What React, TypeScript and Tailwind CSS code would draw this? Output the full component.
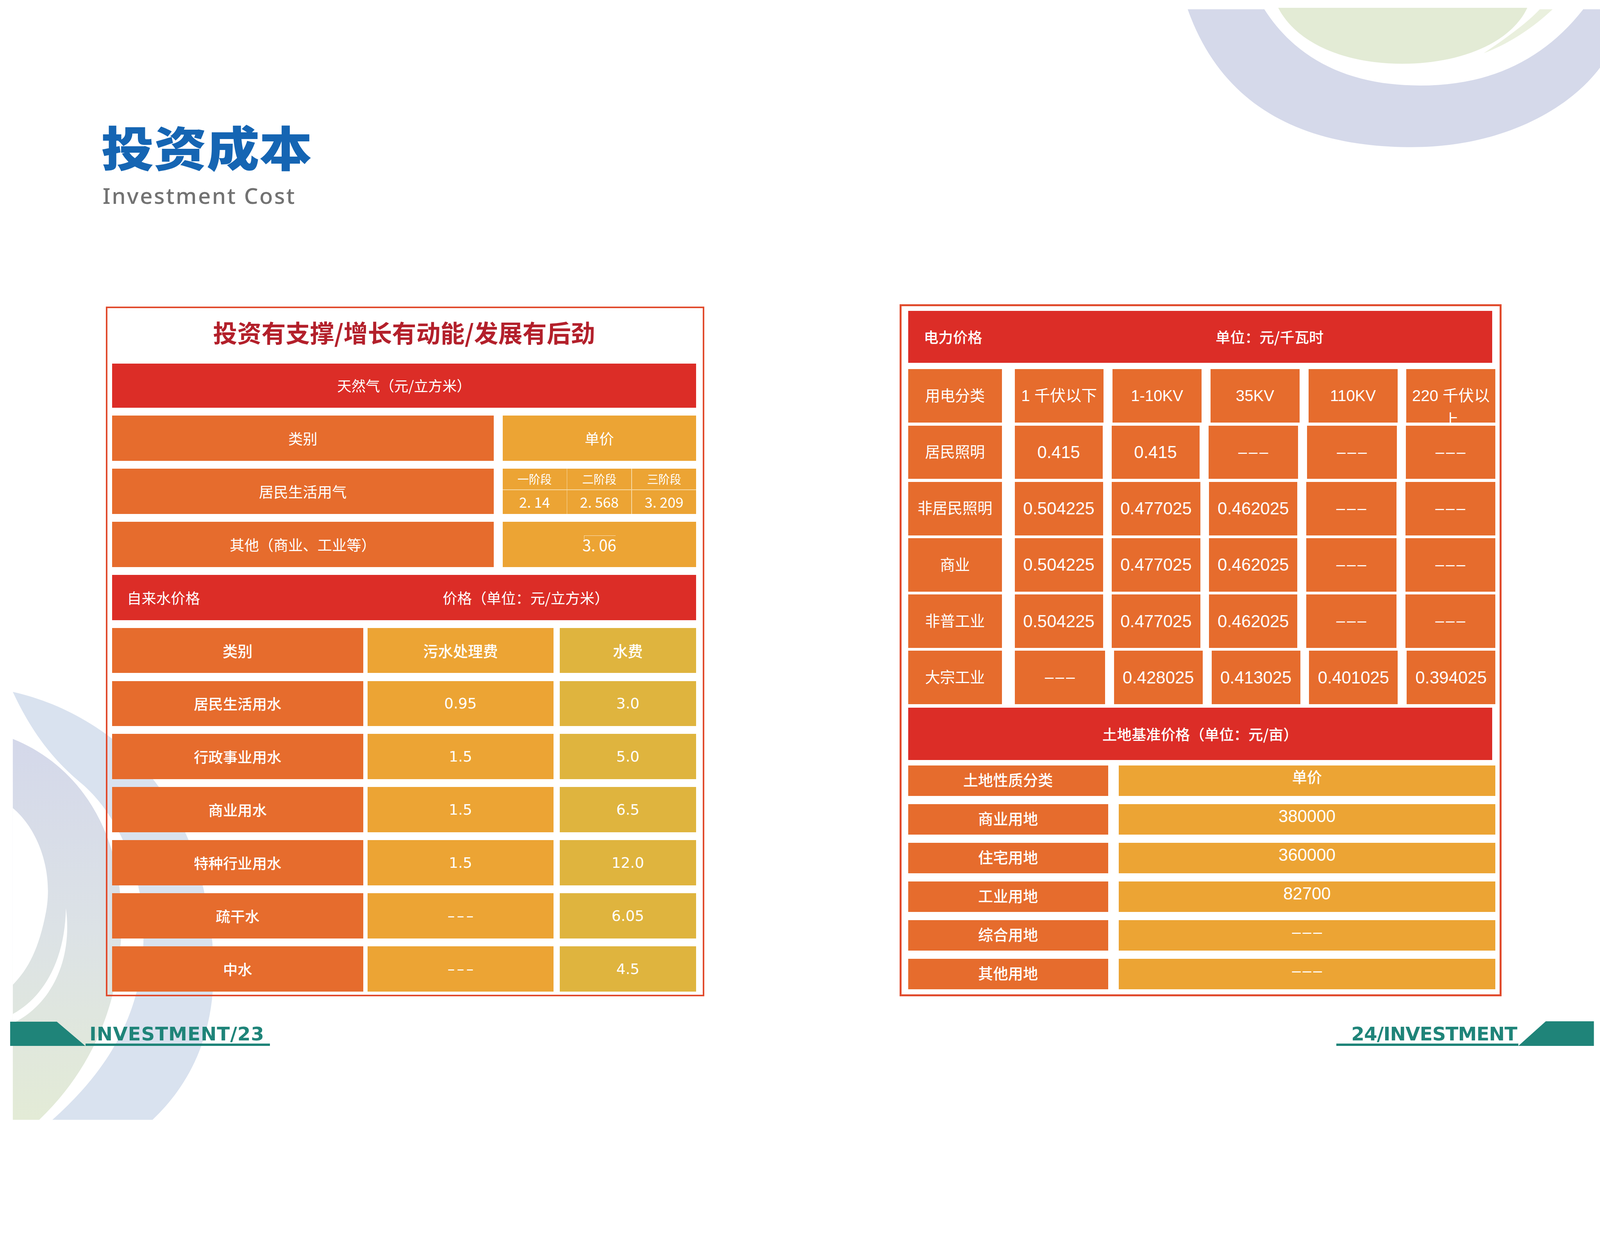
import React from "react";

const CJK = "font-['Noto_Sans_CJK_SC',sans-serif]";
const ARIAL = "font-['Liberation_Sans','Noto_Sans_CJK_SC',sans-serif]";
const VERA = "font-['DejaVu_Sans','Noto_Sans_CJK_SC',sans-serif]";

const RED = "bg-[#dc2d27]";
const ORANGE = "bg-[#e66c2d]";
const AMBER = "bg-[#eca434]";
const GOLD = "bg-[#dfb43e]";

const DASH = "–––";

// background swirls (top right and bottom left)
const Decor = () => (
  <svg
    className="pointer-events-none absolute inset-0"
    width="4490"
    height="3175"
    viewBox="0 0 4490 3175"
  >
    <defs>
      <linearGradient id="lav" x1="0" y1="0" x2="0" y2="1">
        <stop offset="0" stopColor="#d4d8ea" />
        <stop offset="0.5" stopColor="#dce2e6" />
        <stop offset="1" stopColor="#e3ebd6" />
      </linearGradient>
    </defs>
    <path
      d="M3333 26 C3440 330 3700 413 3963 413 C4210 413 4400 310 4490 190 L4490 26 L4443 26 C4330 170 4180 240 3985 240 C3790 240 3640 170 3548 26 Z"
      fill="#d5d9ea"
    />
    <path
      d="M3587 22 C3640 125 3780 179 3935 179 C4100 179 4240 120 4286 22 Z"
      fill="#e3ebd5"
    />
    <path
      d="M4321 26 L4357 26 C4300 80 4230 125 4164 149 C4230 105 4290 60 4321 26 Z"
      fill="#eaf0de"
    />

    <path
      d="M36 2074 C200 2140 330 2300 340 2550 C350 2800 260 3000 110 3143 L36 3143 Z"
      fill="url(#lav)"
    />
    <path
      d="M36 2268 C110 2330 150 2450 129 2560 C110 2660 80 2720 36 2764 Z"
      fill="#ffffff"
    />
    <path
      d="M185 2549 C182 2700 120 2800 36 2846 L36 2872 C140 2822 205 2700 185 2549 Z"
      fill="#ffffff"
    />
    <path
      d="M36 1942 C250 1990 480 2150 560 2450 C640 2750 600 2980 428 3143 L147 3143 C330 2980 420 2800 400 2560 C380 2380 300 2260 230 2200 C170 2150 100 2080 36 1942 Z"
      fill="#d9e2ef"
    />
  </svg>
);

const GasRow = ({
  label,
  children,
}: {
  label: string;
  children: React.ReactNode;
}) => (
  <div className="flex h-[127px] gap-[25px]">
    <div
      className={`flex w-[1071px] items-center justify-center text-[41px] ${ORANGE}`}
    >
      {label}
    </div>
    <div className={`relative flex-1 ${AMBER}`}>{children}</div>
  </div>
);

const water = [
  ["居民生活用水", "0.95", "3.0"],
  ["行政事业用水", "1.5", "5.0"],
  ["商业用水", "1.5", "6.5"],
  ["特种行业用水", "1.5", "12.0"],
  ["疏干水", DASH, "6.05"],
  ["中水", DASH, "4.5"],
];

const LeftPanel = () => (
  <div className="mt-[6px] flex w-[1679px] flex-col border-[5px] border-[#e14b2d] pb-[9px] pl-[13px] pr-[18px]">
    <div
      className={`flex h-[156px] items-center justify-center pb-[22px] text-[68px] font-bold leading-none text-[#b3202b] ${CJK}`}
    >
      投资有支撑/增长有动能/发展有后劲
    </div>
    <div className={`flex flex-col gap-[22px] text-white ${CJK}`}>
      <div
        className={`flex h-[124px] items-center justify-center text-[40px] ${RED}`}
      >
        天然气（元/立方米）
      </div>
      <GasRow label="类别">
        <div className="flex h-full items-center justify-center text-[41px]">
          单价
        </div>
      </GasRow>
      <GasRow label="居民生活用气">
        <div className="grid h-full grid-cols-3 grid-rows-[58px_1fr] gap-[2px] bg-[#f6dba8]">
          {["一阶段", "二阶段", "三阶段"].map((t) => (
            <div
              key={t}
              className={`flex items-center justify-center text-[32px] ${AMBER}`}
            >
              {t}
            </div>
          ))}
          {["2. 14", "2. 568", "3. 209"].map((t) => (
            <div
              key={t}
              className={`flex items-center justify-center text-[40px] ${AMBER}`}
            >
              {t}
            </div>
          ))}
        </div>
      </GasRow>
      <GasRow label="其他（商业、工业等）">
        <div className="flex h-full items-center justify-center text-[44px]">
          3. 06
        </div>
        <span className="absolute left-[229px] top-[39px] h-[18px] w-[88px] border-l-2 border-t-2 border-white/70" />
      </GasRow>

      <div className={`flex h-[127px] items-center text-[41px] ${RED}`}>
        <span className="w-[928px] pl-[42px]">自来水价格</span>
        <span>价格（单位：元/立方米）</span>
      </div>

      <div className="flex h-[127px] text-[42px] font-medium">
        <div className={`flex w-[705px] items-center justify-center ${ORANGE}`}>
          类别
        </div>
        <div
          className={`ml-[12px] flex w-[522px] items-center justify-center ${AMBER}`}
        >
          污水处理费
        </div>
        <div
          className={`ml-[17px] flex flex-1 items-center justify-center ${GOLD}`}
        >
          水费
        </div>
      </div>
      {water.map(([name, fee, price]) => (
        <div key={name} className="flex h-[127px]">
          <div
            className={`flex w-[705px] items-center justify-center text-[41px] font-medium ${ORANGE}`}
          >
            {name}
          </div>
          <div
            className={`ml-[12px] flex w-[522px] items-center justify-center text-[41px] ${
              fee === DASH ? "pl-[6px] tracking-[0.14em]" : ""
            } ${VERA} ${AMBER}`}
          >
            {fee}
          </div>
          <div
            className={`ml-[17px] flex flex-1 items-center justify-center text-[41px] ${VERA} ${GOLD}`}
          >
            {price}
          </div>
        </div>
      ))}
    </div>
  </div>
);

const power = [
  ["居民照明", "0.415", "0.415", DASH, DASH, DASH],
  ["非居民照明", "0.504225", "0.477025", "0.462025", DASH, DASH],
  ["商业", "0.504225", "0.477025", "0.462025", DASH, DASH],
  ["非普工业", "0.504225", "0.477025", "0.462025", DASH, DASH],
  ["大宗工业", DASH, "0.428025", "0.413025", "0.401025", "0.394025"],
];

const land = [
  ["土地性质分类", "单价"],
  ["商业用地", "380000"],
  ["住宅用地", "360000"],
  ["工业用地", "82700"],
  ["综合用地", DASH],
  ["其他用地", DASH],
];

const RightPanel = () => (
  <div
    className={`flex w-[1690px] flex-col border-[6px] border-[#e14b2d] pb-[14px] pl-[19px] pr-[12px] pt-[13px] text-white ${ARIAL}`}
  >
    <div
      className={`mr-[9px] flex h-[146px] items-center text-[41px] font-medium ${CJK} ${RED}`}
    >
      <span className="w-[863px] pl-[44px]">电力价格</span>
      <span>单位：元/千瓦时</span>
    </div>

    <div className="mt-[18px] flex flex-col gap-[8px]">
      <div className="flex h-[150px] gap-[25px]">
        <div
          className={`mr-[11px] flex w-[263px] shrink-0 items-center justify-center text-[42px] ${ORANGE}`}
        >
          用电分类
        </div>
        {["1 千伏以下", "1-10KV", "35KV", "110KV", "220 千伏以上"].map((h) => (
          <div
            key={h}
            className={`flex-1 overflow-hidden px-[4px] pt-[41px] text-center text-[44px] leading-[68px] ${ORANGE}`}
          >
            {h}
          </div>
        ))}
      </div>
      {power.map(([name, ...vals]) => (
        <div key={name} className="flex h-[150px] gap-[25px]">
          <div
            className={`mr-[11px] flex w-[263px] shrink-0 items-center justify-center text-[42px] ${ORANGE}`}
          >
            {name}
          </div>
          {vals.map((v, i) => (
            <div
              key={i}
              className={`flex flex-1 items-center justify-center ${
                v === DASH
                  ? "pl-[5px] text-[44px] tracking-[0.12em]"
                  : "text-[48px]"
              } ${ORANGE}`}
            >
              {v}
            </div>
          ))}
        </div>
      ))}
    </div>

    <div
      className={`mr-[9px] mt-[10px] flex h-[147px] items-center justify-center text-[41px] font-medium ${CJK} ${RED}`}
    >
      土地基准价格（单位：元/亩）
    </div>

    <div className="mt-[15px] flex flex-col gap-[22.5px]">
      {land.map(([kind, price]) => (
        <div key={kind} className="flex h-[86px]">
          <div
            className={`flex w-[561px] items-center justify-center text-[42px] font-medium ${ORANGE}`}
          >
            {kind}
          </div>
          <div
            className={`ml-[30px] flex flex-1 items-center justify-center pb-[18px] ${
              price === DASH
                ? "pl-[5px] text-[44px] tracking-[0.12em]"
                : price === "单价"
                  ? "text-[42px] font-medium"
                  : "text-[48px]"
            } ${AMBER}`}
          >
            {price}
          </div>
        </div>
      ))}
    </div>
  </div>
);

const App = () => {
  // the page is drawn at 4490x3175 and fitted to whatever the window really is
  const fit =
    typeof window !== "undefined"
      ? Math.min(window.innerWidth / 4490, window.innerHeight / 3175)
      : 1;

  return (
    <div className="h-screen w-screen overflow-hidden bg-white">
      <div
        className="relative h-[3175px] w-[4490px] overflow-hidden bg-white"
        style={{ zoom: fit }}
      >
        <Decor />
        <div className="relative flex flex-col">
          {/* header */}
          <div className="pl-[284px] pt-[343px]">
            <h1
              className={`origin-top scale-y-[0.9] text-[148px] font-black leading-none text-[#1565b3] ${CJK}`}
            >
              投资成本
            </h1>
            <p className="mt-[28px] pl-[4px] text-[62px] font-medium leading-none tracking-[0.06em] text-[#727272] font-['Noto_Sans',sans-serif]">
              Investment Cost
            </p>
          </div>

          {/* tables */}
          <div className="mt-[273px] flex items-start gap-[548px] pl-[297px]">
            <LeftPanel />
            <RightPanel />
          </div>

          {/* footer */}
          <div className="mt-[70px] flex items-end justify-between pl-[29px] pr-[17px] font-['DejaVu_Sans',sans-serif] font-bold text-[#1f8479]">
            <div className="flex items-end">
              <svg width="211" height="68" viewBox="0 0 211 68">
                <polygon points="0,0 131,0 211,68 0,68" fill="#1f8479" />
              </svg>
              <span className="border-b-[7px] border-[#1f8479] pb-[1px] pl-[11px] pr-[16px] text-[53px] leading-none tracking-[1px]">
                INVESTMENT/23
              </span>
            </div>
            <div className="flex items-end">
              <span className="border-b-[7px] border-[#1f8479] pb-[1px] pl-[42px] pr-[4px] text-[53px] leading-none tracking-[-1px]">
                24/INVESTMENT
              </span>
              <svg width="212" height="69" viewBox="0 0 212 69">
                <polygon points="0,69 77,0 212,0 212,69" fill="#1f8479" />
              </svg>
            </div>
          </div>
        </div>
      </div>
    </div>
  );
};

export default App;
